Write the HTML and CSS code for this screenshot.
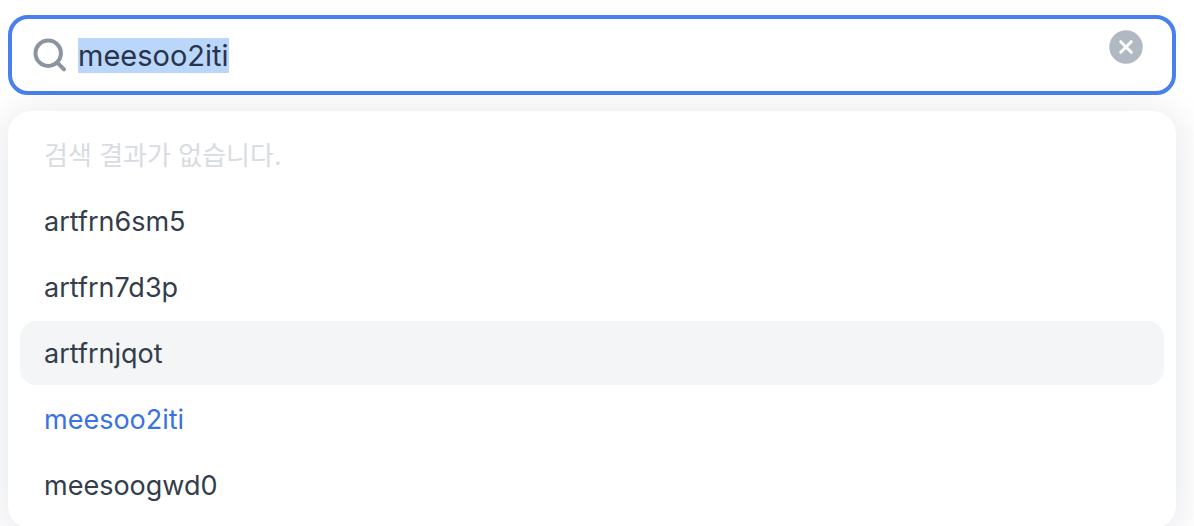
FILE: index.html
```html
<!DOCTYPE html>
<html lang="ko">
<head>
<meta charset="utf-8">
<meta name="viewport" content="width=device-width, initial-scale=1">
<title>meesoo2iti</title>
<link rel="stylesheet" href="styles.css">
</head>
<body>
<main class="search">
  <form class="search-field" role="search">
    <svg class="search-icon" viewBox="0 0 34 34" aria-hidden="true">
      <circle cx="15.2" cy="15.2" r="12.7"/>
      <path d="M24.5 24.8L31 31.3"/>
    </svg>
    <input class="search-input" id="search-input" type="text" value="meesoo2iti" aria-label="검색" autocomplete="off" spellcheck="false" autofocus>
    <button class="clear-button" type="reset" aria-label="지우기">
      <svg class="clear-icon" viewBox="0 0 34 34" aria-hidden="true">
        <circle cx="17" cy="17" r="16.7"/>
        <path d="M11.7 11.7L22.3 22.3M22.3 11.7L11.7 22.3"/>
      </svg>
    </button>
  </form>
  <div class="results">
    <p class="result-empty">검색 결과가 없습니다.</p>
    <button class="result" type="button">artfrn6sm5</button>
    <button class="result" type="button">artfrn7d3p</button>
    <button class="result result-active" type="button">artfrnjqot</button>
    <button class="result result-selected" type="button">meesoo2iti</button>
    <button class="result" type="button">meesoogwd0</button>
  </div>
</main>
<script src="search.js"></script>
</body>
</html>
```
FILE: styles.css
```css
* {
  box-sizing: border-box;
}

body {
  height: 100vh;
  margin: 0;
  overflow: hidden;
  background: #fff;
  color: #333d4b;
  font-family: Inter, "Noto Sans CJK KR", sans-serif;
}

.search {
  display: flex;
  flex-direction: column;
  gap: 16px;
  padding: 15px 18px 0 8px;
}

.search-field {
  display: flex;
  align-items: center;
  gap: 11px;
  padding: 11px 29px 11px 21px;
  border: 4px solid #4880ee;
  border-radius: 20px;
  background: #fff;
}

.search-icon {
  width: 34px;
  height: 34px;
  fill: none;
  stroke: #8b95a1;
  stroke-width: 4;
  stroke-linecap: round;
}

.search-input {
  flex: 1;
  min-width: 0;
  height: 50px;
  padding: 1px 0 0;
  border: 0;
  outline: 0;
  background: transparent;
  color: #333d4b;
  caret-color: transparent;
  font: inherit;
  font-size: 29px;
  line-height: 38px;
}

.search-input::selection {
  background: #bad6fb;
  color: #28344a;
}

.clear-button {
  align-self: flex-start;
  width: 34px;
  height: 34px;
  padding: 0;
  border: 0;
  background: none;
}

.clear-icon {
  display: block;
  fill: #b0b8c1;
  stroke-linecap: round;
}

.clear-icon path {
  stroke: #fff;
  stroke-width: 3;
}

.results {
  display: flex;
  flex-direction: column;
  gap: 2px;
  padding: 12px;
  border-radius: 24px;
  background: #fff;
  box-shadow: 0 4px 40px rgba(0, 27, 55, 0.12);
}

.result,
.result-empty {
  margin: 0;
  padding: 13px 24px 11px;
  border: 0;
  border-radius: 16px;
  background: none;
  color: #333d4b;
  font: inherit;
  font-size: 27px;
  line-height: 40px;
  text-align: left;
}

.result-empty {
  color: #d8dce1;
  font-size: 26px;
}

.result-active {
  background: #f3f5f7;
}

.result-selected {
  color: #3a72e5;
}
```
FILE: search.js
```js
const input = document.getElementById("search-input");
input.focus();
input.select();
```
